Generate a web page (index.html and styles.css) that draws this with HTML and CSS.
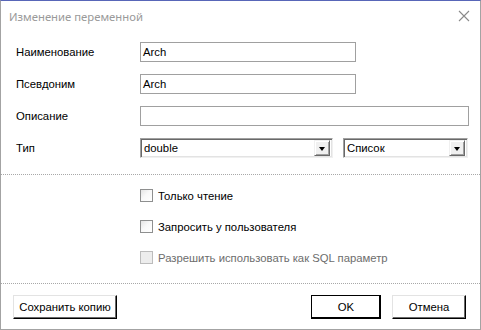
FILE: index.html
```html
<!DOCTYPE html>
<html lang="ru">
<head>
<meta charset="utf-8">
<title>Изменение переменной</title>
<link rel="stylesheet" href="styles.css">
</head>
<body>
<div class="window">
  <div class="titlebar">
    <span class="title">Изменение переменной</span>
    <svg class="close" width="12" height="12" viewBox="0 0 12 12"><path d="M1 1L11 11M11 1L1 11" stroke="#8a8a8a" stroke-width="1.1" fill="none"/></svg>
  </div>
  <div class="form">
    <label class="label">Наименование</label>
    <div class="field"><div class="input short">Arch</div></div>
    <label class="label">Псевдоним</label>
    <div class="field"><div class="input short">Arch</div></div>
    <label class="label">Описание</label>
    <div class="field"><div class="input wide"></div></div>
    <label class="label">Тип</label>
    <div class="field combos">
      <div class="combo c1"><span class="ctext">double</span><span class="cbtn"><i class="tri"></i></span></div>
      <div class="combo c2"><span class="ctext">Список</span><span class="cbtn"><i class="tri"></i></span></div>
    </div>
  </div>
  <div class="sep"></div>
  <div class="checks">
    <div class="check"><span class="box"></span><span>Только чтение</span></div>
    <div class="check"><span class="box"></span><span>Запросить у пользователя</span></div>
    <div class="check disabled"><span class="box"></span><span>Разрешить использовать как SQL параметр</span></div>
  </div>
  <div class="footer">
    <div class="btn save">Сохранить копию</div>
    <div class="right">
      <div class="btn ok">OK</div>
      <div class="btn cancel">Отмена</div>
    </div>
  </div>
</div>
</body>
</html>
```

FILE: styles.css
```css
* { box-sizing: border-box; }
html, body { margin: 0; padding: 0; background: #fff; }
body { font-family: "Liberation Sans", Arial, sans-serif; font-size: 11.3px; color: #000; }

.window {
  width: 481px;
  height: 330px;
  border: 1px solid #a3a3a3;
  border-top-color: #5866b8;
  background: #fff;
  display: flex;
  flex-direction: column;
}

.titlebar {
  height: 31px;
  display: flex;
  align-items: center;
  justify-content: space-between;
  padding: 0 10px 0 8px;
}
.title {
  font-family: "Noto Sans", "Open Sans", sans-serif;
  font-size: 11.3px;
  color: #9a9a9a;
}
.close { display: block; margin-top: -1px; }

.form {
  display: grid;
  grid-template-columns: 124px 1fr;
  grid-auto-rows: 20px;
  row-gap: 12px;
  padding: 10px 11px 0 15px;
}
.label { display: flex; align-items: center; }
.field { display: flex; align-items: center; }

.input {
  height: 20px;
  border: 1px solid #a0a0a0;
  padding: 0 2px;
  display: flex;
  align-items: center;
  background: #fff;
}
.input.short { width: 216px; }
.input.wide { width: 100%; }

.combos { gap: 10px; }
.combo {
  height: 20px;
  display: flex;
  align-items: center;
  border-top: 1px solid #a0a0a0;
  border-left: 1px solid #a0a0a0;
  border-bottom: 1px solid #f0f0f0;
  border-right: 1px solid #f0f0f0;
  box-shadow: inset 1px 1px 0 #696969, inset -1px -1px 0 #e3e3e3;
  padding: 2px;
  background: #fff;
}
.combo.c1 { width: 193px; }
.combo.c2 { width: 125px; }
.ctext { flex: 1; padding-left: 1px; }
.cbtn {
  width: 16px;
  height: 16px;
  background: #f0f0f0;
  border-top: 1px solid #f0f0f0;
  border-left: 1px solid #f0f0f0;
  border-right: 1px solid #696969;
  border-bottom: 1px solid #696969;
  box-shadow: inset 1px 1px 0 #fff, inset -1px -1px 0 #a0a0a0;
  display: flex;
  align-items: center;
  justify-content: center;
}
.tri {
  display: block;
  width: 0;
  height: 0;
  border-left: 3.5px solid transparent;
  border-right: 3.5px solid transparent;
  border-top: 4px solid #000;
  margin-top: 1px;
}

.sep {
  margin-top: 16px;
  border-top: 1px dotted #a8a8a8;
}

.checks {
  display: flex;
  flex-direction: column;
  gap: 18px;
  padding: 14px 0 0 139px;
}
.check {
  display: flex;
  align-items: center;
  height: 13px;
  gap: 5px;
}
.box {
  width: 13px;
  height: 13px;
  border: 1px solid #8e8f8f;
  background: linear-gradient(135deg, #e4e4e4 0%, #f8f8f8 45%, #fff 100%);
}
.check.disabled { color: #6d6d6d; }
.check.disabled .box {
  border-color: #bcbcbc;
  background: #ededed;
}

.footer {
  margin-top: auto;
  height: 46px;
  border-top: 1px dotted #a8a8a8;
  display: flex;
  justify-content: space-between;
  padding: 11px 14px 10px 12px;
}
.right { display: flex; gap: 11px; }
.btn {
  height: 24px;
  display: flex;
  align-items: center;
  justify-content: center;
  background: #fff;
  border-top: 1px solid #e3e3e3;
  border-left: 1px solid #e3e3e3;
  border-right: 1px solid #000;
  border-bottom: 1px solid #000;
  box-shadow: inset -1px -1px 0 #696969;
}
.btn.save { width: 104px; }
.btn.ok { width: 70px; border: 1px solid #000; box-shadow: inset -1px -1px 0 #000, inset 1px 1px 0 #fff; }
.btn.cancel { width: 74px; }
```
